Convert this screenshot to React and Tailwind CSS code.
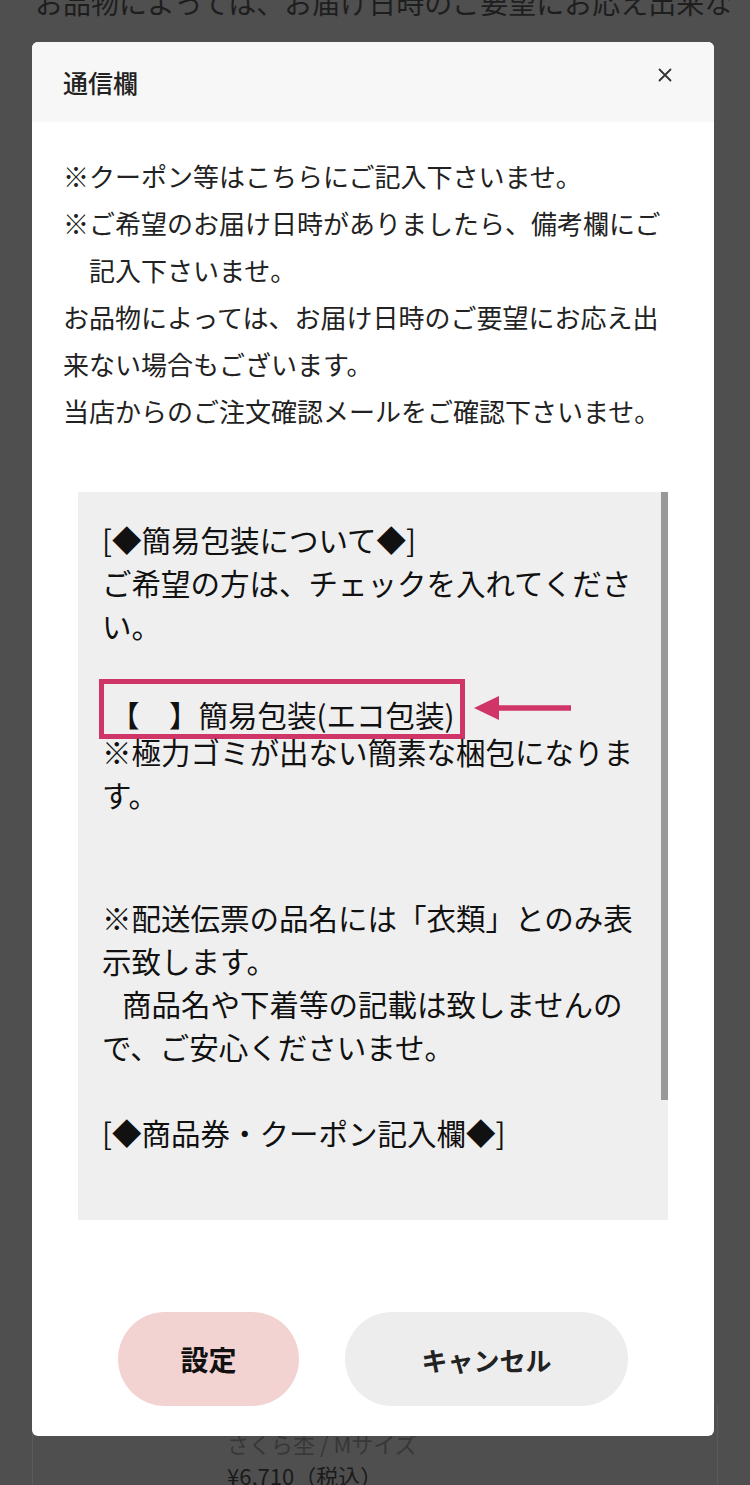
import React from "react";

const FONT = { fontFamily: '"Noto Sans CJK JP", "Noto Sans", sans-serif' };

export default function App() {
  return (
    <div
      className="relative w-[750px] h-[1485px] overflow-hidden bg-[#4f4f4f] text-[#1c1c1c]"
      style={FONT}
    >
      {/* page behind overlay */}
      <div className="flex flex-col h-full">
        <div className="mt-[-18px] pl-[35px] text-[28px] leading-[40px] text-[#1e1e1e]">
          お品物によっては、お届け日時のご要望にお応え出来な
        </div>
        <div className="flex-1" />
        <div className="mx-[32px] h-[80px] border-x border-[#5b5b5b] pl-[194px] pt-[22px]">
          <div className="text-[22px] leading-[32px] text-[#373737]">さくら杢 / Mサイズ</div>
          <div className="text-[22px] leading-[32px] text-[#1a1a1a]">¥6,710（税込）</div>
        </div>
      </div>

      {/* modal */}
      <div className="absolute left-[32px] top-[42px] w-[682px] h-[1394px] bg-white rounded-[6px] overflow-hidden flex flex-col">
        <div className="h-[80px] bg-[#f7f7f7] flex items-center justify-between pl-[31px] pr-[42px]">
          <div className="text-[25px] font-medium text-[#222] pt-[2px]">通信欄</div>
          <svg width="14" height="14" viewBox="0 0 14 14" className="mb-[14px]">
            <path d="M1.5 1.5 L12.5 12.5 M12.5 1.5 L1.5 12.5" stroke="#333" strokeWidth="1.8" strokeLinecap="round" />
          </svg>
        </div>
        <div className="px-[31px] pt-[30px] text-[26px] leading-[47px] text-[#222]">
          <div>※クーポン等はこちらにご記入下さいませ。</div>
          <div className="pl-[26px] -indent-[26px]">※ご希望のお届け日時がありましたら、備考欄にご記入下さいませ。</div>
          <div>お品物によっては、お届け日時のご要望にお応え出来ない場合もございます。</div>
          <div>当店からのご注文確認メールをご確認下さいませ。</div>
        </div>
        <div className="mx-[46px] mt-[58px] h-[728px] bg-[#efefef] flex">
          <div className="flex-1 pl-[24px] pt-[26px] text-[29.5px] leading-[43px] text-[#111] overflow-hidden">
            <div>[◆簡易包装について◆]</div>
            <div>ご希望の方は、チェックを入れてください。</div>
            <div className="h-[40px]" />
            <div className="flex items-center h-[43px]">
              <span className="flex items-end h-[60px] -ml-[3px] border-[5px] border-[#cf3566] pl-[6px] pr-[6px] leading-[40px] whitespace-nowrap">
                【　】簡易包装(エコ包装)
              </span>
              <svg width="98" height="28" viewBox="0 0 98 28" className="ml-[9px] mb-[2px] shrink-0">
                <path d="M22 14 H97" stroke="#cf3566" strokeWidth="5.5" />
                <path d="M0 14 L25 2 L25 26 Z" fill="#cf3566" />
              </svg>
            </div>
            <div>※極力ゴミが出ない簡素な梱包になります。</div>
            <div className="h-[40px]" />
            <div className="h-[40px]" />
            <div>※配送伝票の品名には「衣類」とのみ表示致します。</div>
            <div className="indent-[20px]">商品名や下着等の記載は致しませんので、ご安心くださいませ。</div>
            <div className="h-[43px]" />
            <div>[◆商品券・クーポン記入欄◆]</div>
          </div>
          <div className="w-[7px] self-start h-[608px] bg-[#999] shrink-0" />
        </div>
        <div className="flex justify-center gap-[46px] mt-[92px]">
          <button className="w-[181px] h-[94px] rounded-full bg-[#f2d3d1] text-[28px] font-bold text-[#111]">
            設定
          </button>
          <button className="w-[283px] h-[94px] rounded-full bg-[#ededed] text-[26px] font-bold text-[#222]">
            キャンセル
          </button>
        </div>
      </div>
    </div>
  );
}
